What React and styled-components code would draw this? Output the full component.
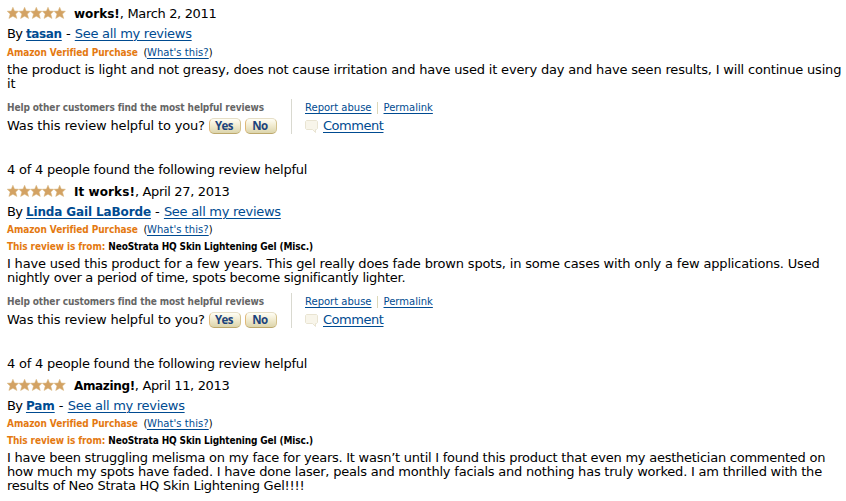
import React from "react";
import styled, { createGlobalStyle } from "styled-components";

const GlobalStyle = createGlobalStyle`
  * { box-sizing: border-box; }
  body {
    margin: 0;
    background: #fff;
    color: #000;
    font-family: "DejaVu Sans", Verdana, sans-serif;
    font-size: 13px;
    overflow: hidden;
  }
`;

const Page = styled.main`
  width: 846px;
  height: 501px;
  overflow: hidden;
  padding: 4px 0 0 7px;
`;

const Review = styled.article`
  display: flex;
  flex-direction: column;
  align-items: flex-start;
`;

const Line = styled.div`
  display: flex;
  align-items: center;
  height: ${(p) => p.$h}px;
  line-height: ${(p) => p.$h}px;
  white-space: pre;
`;

const Text = styled.span`
  letter-spacing: ${(p) => p.$ls || 0}px;
`;

const Title = styled.b`
  margin-left: 8px;
  font-size: 12px;
  letter-spacing: ${(p) => p.$ls || 0}px;
`;

const Link = styled.a`
  color: #004b91;
  text-decoration: underline;
  text-decoration-thickness: 1px;
  text-underline-offset: 2px;
  letter-spacing: ${(p) => p.$ls || 0}px;
`;

const AuthorLink = styled(Link)`
  font-size: 12px;
  font-weight: 700;
`;

const SmallLine = styled(Line)`
  font-size: 10px;
`;

const Label = styled.b`
  font-family: "DejaVu Sans Condensed", "DejaVu Sans", sans-serif;
  font-stretch: condensed;
  font-size: 10px;
  color: ${(p) => p.$color || "#000"};
  letter-spacing: ${(p) => p.$ls || 0}px;
`;

const Body = styled.div`
  line-height: 14px;
  white-space: pre;
  padding: 2px 0 8px;
`;

const BodyLine = styled.div`
  letter-spacing: ${(p) => p.$ls || 0}px;
`;

const Feedback = styled.div`
  display: flex;
  height: 35px;
  margin-bottom: 25px;
`;

const Vote = styled.div`
  width: 285px;
  height: 35px;
  border-right: 1px solid #d9d9d0;
`;

const Actions = styled.div`
  padding-left: 13px;
`;

const Separator = styled.span`
  width: 1px;
  height: 12px;
  margin: 0 6px 0 5px;
  background: #ddd8b8;
`;

const VoteButton = styled.button`
  width: 32px;
  height: 16px;
  margin-left: 4px;
  padding: 0 2px 1px 0;
  border: 1px solid;
  border-color: #e6dfc8 #d3c18c #bda86c #e0b878;
  border-radius: 5px;
  background: linear-gradient(#fffef5, #f2ecd2 45%, #dcd5ac);
  color: #1b437c;
  font: 700 11.5px/13px "Open Sans", sans-serif;
  letter-spacing: -0.6px;
`;

const STAR = "M5.9 .2 L7.5 4 L11.6 4.2 L8.7 7.1 L9.9 11.5 L5.9 9.2 L1.9 11.5 L3.1 7.1 L.2 4.2 L4.3 4 Z";

const StarRow = styled.svg`
  margin-bottom: 2px;
`;

function Stars() {
  return (
    <StarRow width="59" height="12" viewBox="0 0 59 12" aria-label="5 stars">
      {[0, 11.7, 23.4, 35.1, 46.8].map((x) => (
        <path key={x} d={STAR} transform={`translate(${x} 0)`} fill="#d3a263" stroke="#d9b983" strokeWidth="0.5" />
      ))}
    </StarRow>
  );
}

const Bubble = styled.svg`
  margin-right: 5px;
`;

function CommentIcon() {
  return (
    <Bubble width="13" height="13" viewBox="0 0 13 13">
      <path d="M1.5 .5h10l1 1v7l-1 1h-1v3l-3-3h-6l-1-1v-7z" fill="#f8f5ea" stroke="#e9e4d2" />
    </Bubble>
  );
}

function ReviewFeedback() {
  return (
    <Feedback>
      <Vote>
        <SmallLine $h={17}>
          <Label $color="#666" $ls={-0.1}>Help other customers find the most helpful reviews</Label>
        </SmallLine>
        <Line $h={20}>
          <Text $ls={-0.15}>Was this review helpful to you?</Text>
          <VoteButton>Yes</VoteButton>
          <VoteButton>No</VoteButton>
        </Line>
      </Vote>
      <Actions>
        <SmallLine $h={17}>
          <Link>Report abuse</Link>
          <Separator />
          <Link>Permalink</Link>
        </SmallLine>
        <Line $h={20}>
          <CommentIcon />
          <Link $ls={-0.46}>Comment</Link>
        </Line>
      </Actions>
    </Feedback>
  );
}

const reviews = [
  {
    title: "works!", titleLs: 0, date: "March 2, 2011", author: "tasan", authorLs: -0.36, feedback: true,
    lines: [
      ["the product is light and not greasy, does not cause irritation and have used it every day and have seen results, I will continue using", -0.18],
      ["it", 0],
    ],
  },
  {
    helpful: true, title: "It works!", titleLs: 0.08, date: "April 27, 2013", author: "Linda Gail LaBorde", authorLs: -0.13, product: true, feedback: true,
    lines: [
      ["I have used this product for a few years. This gel really does fade brown spots, in some cases with only a few applications. Used", -0.177],
      ["nightly over a period of time, spots become significantly lighter.", -0.28],
    ],
  },
  {
    helpful: true, title: "Amazing!", titleLs: -0.35, date: "April 11, 2013", author: "Pam", authorLs: -0.1, product: true,
    lines: [
      ["I have been struggling melisma on my face for years. It wasn’t until I found this product that even my aesthetician commented on", -0.25],
      ["how much my spots have faded. I have done laser, peals and monthly facials and nothing has truly worked. I am thrilled with the", -0.215],
      ["results of Neo Strata HQ Skin Lightening Gel!!!!", -0.25],
    ],
  },
];

export default function App() {
  return (
    <Page>
      <GlobalStyle />
      {reviews.map((r) => (
        <Review key={r.title}>
          {r.helpful && (
            <Line $h={22}>
              <Text $ls={-0.22}>4 of 4 people found the following review helpful</Text>
            </Line>
          )}
          <Line $h={r.helpful ? 22 : 20}>
            <Stars />
            <Title $ls={r.titleLs}>{r.title}</Title>
            <Text $ls={-0.34}>, {r.date}</Text>
          </Line>
          <Line $h={r.helpful ? 18 : 20}>
            <Text $ls={-0.6}>By </Text>
            <AuthorLink $ls={r.authorLs}>{r.author}</AuthorLink>
            <Text> - </Text>
            <Link $ls={-0.28}>See all my reviews</Link>
          </Line>
          <SmallLine $h={17}>
            <Label $color="#e47911" $ls={-0.08}>Amazon Verified Purchase</Label>
            <Text $ls={-0.4}>  (</Text>
            <Link $ls={0.07}>What's this?</Link>
            <Text>)</Text>
          </SmallLine>
          {r.product && (
            <SmallLine $h={17}>
              <Label $color="#e47911" $ls={-0.1}>This review is from: </Label>
              <Label $ls={-0.12}>NeoStrata HQ Skin Lightening Gel (Misc.)</Label>
            </SmallLine>
          )}
          <Body>
            {r.lines.map(([t, ls]) => (
              <BodyLine key={t} $ls={ls}>{t}</BodyLine>
            ))}
          </Body>
          {r.feedback && <ReviewFeedback />}
        </Review>
      ))}
    </Page>
  );
}
